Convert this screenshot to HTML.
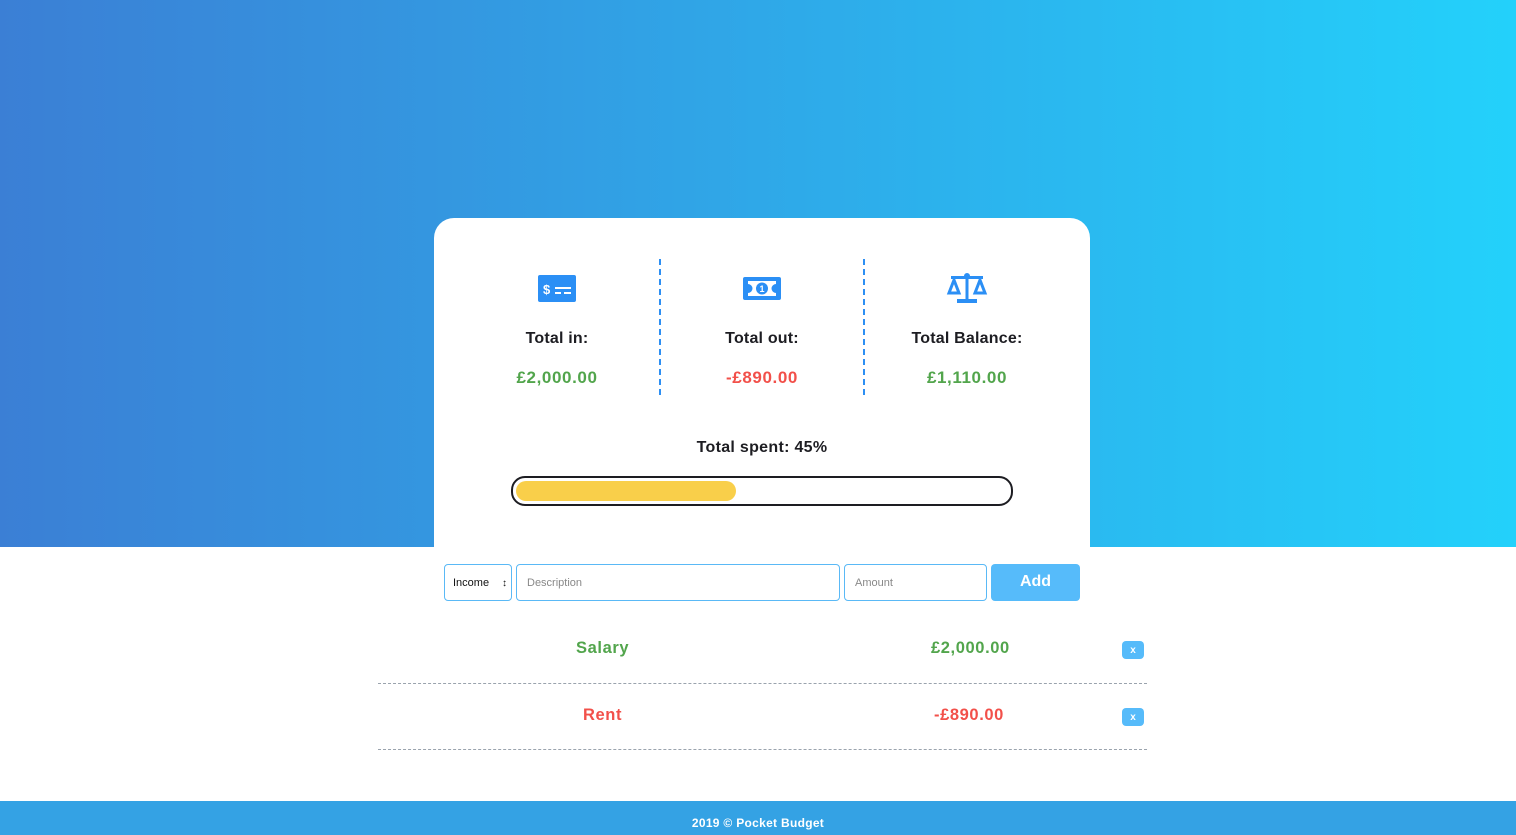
<!DOCTYPE html>
<html><head><meta charset="utf-8"><style>
*{box-sizing:border-box;margin:0;padding:0}
body{width:1516px;height:835px;overflow:hidden;background:#fff;font-family:"Liberation Sans",sans-serif;position:relative}
.top{position:absolute;left:0;top:0;width:1516px;height:547px;background:linear-gradient(90deg,#3b7fd5,#23d1fb)}
.card{position:absolute;left:434px;top:218px;width:656px;height:340px;background:#fff;border-radius:20px 20px 0 0}
.col{position:absolute;top:0;width:200px;text-align:center}
.icon{position:absolute;top:54px;left:0;width:200px;height:34px}
.lbl{position:absolute;top:112px;width:200px;font-weight:bold;font-size:16px;color:#1d1d22;letter-spacing:0.2px}
.val{position:absolute;top:150px;width:200px;font-weight:bold;font-size:17px;letter-spacing:0.6px}
.g{color:#52a54c}.r{color:#f2504a}
.div{position:absolute;top:41px;height:136px;border-left:2px dashed #2d8ff3}
.spent{position:absolute;top:221px;left:0;width:656px;text-align:center;font-weight:bold;font-size:16px;color:#1d1d22;letter-spacing:0.3px}
.bar{position:absolute;left:77px;top:258px;width:502px;height:30px;border:2.5px solid #1d1d22;border-radius:14px}
.fill{position:absolute;left:3px;top:3px;width:220px;height:20px;background:#f9cf4a;border-radius:10px}
.in{position:absolute;top:564px;height:37px;border:1px solid #5ab9f6;border-radius:4px;font-size:11px;color:#888;padding:0 10px;line-height:37px}
.add{position:absolute;left:991px;top:564px;width:89px;height:37px;background:#56bbfa;border-radius:4px;color:#fff;font-weight:bold;font-size:16px;text-align:center;line-height:35px}
.row{position:absolute;font-weight:bold;font-size:16.5px;letter-spacing:0.6px}
.x{position:absolute;left:1122px;width:22px;height:18px;background:#56bbfa;border-radius:4px;color:#fff;font-size:10px;font-weight:bold;text-align:center;line-height:19px}
.hr{position:absolute;left:378px;width:769px;border-top:1px dashed #9aa3ad}
.foot{position:absolute;left:0;top:801px;width:1516px;height:34px;background:#34a2e4;color:#fff;font-weight:bold;font-size:12px;text-align:center;padding-top:15px;letter-spacing:0.3px}
</style></head><body>
<div class="top"></div>
<div class="card">
 <div class="col" style="left:23px">
  <svg class="icon" viewBox="0 0 200 34"><rect x="81" y="3" width="38" height="27" rx="2" fill="#2b8ff5"/><text x="86" y="22" font-family="Liberation Sans" font-weight="bold" font-size="13" fill="#fff">$</text><rect x="98" y="15" width="16" height="2" fill="#fff"/><rect x="98" y="20" width="6" height="2" fill="#fff"/><rect x="107" y="20" width="7" height="2" fill="#fff"/></svg>
  <div class="lbl">Total in:</div><div class="val g">£2,000.00</div>
 </div>
 <div class="div" style="left:225px"></div>
 <div class="col" style="left:228px">
  <svg class="icon" viewBox="0 0 200 34"><rect x="81" y="5" width="38" height="23" rx="2" fill="#2b8ff5"/><path d="M86 9h28v3a4 4 0 0 0 0 9v3H86v-3a4 4 0 0 0 0-9z" fill="#fff"/><circle cx="100" cy="16.5" r="6" fill="#2b8ff5"/><text x="97.5" y="20" font-family="Liberation Sans" font-weight="bold" font-size="9" fill="#fff">1</text></svg>
  <div class="lbl">Total out:</div><div class="val r">-£890.00</div>
 </div>
 <div class="div" style="left:429px"></div>
 <div class="col" style="left:433px">
  <svg class="icon" viewBox="0 0 200 34"><g fill="#2b8ff5"><circle cx="100" cy="4" r="3"/><rect x="98.5" y="4" width="3" height="24"/><rect x="84" y="4" width="32" height="3"/><rect x="90" y="27" width="20" height="4"/></g><g fill="none" stroke="#2b8ff5" stroke-width="3"><path d="M87 8l-5 13h10z M113 8l-5 13h10z"/></g></svg>
  <div class="lbl">Total Balance:</div><div class="val g">£1,110.00</div>
 </div>
 <div class="spent">Total spent: 45%</div>
 <div class="bar"><div class="fill"></div></div>
</div>
<div class="in" style="left:444px;width:68px;color:#111;padding:0 8px">Income<span style="position:absolute;right:4px;top:0;font-size:10px">&#x2195;</span></div>
<div class="in" style="left:516px;width:324px">Description</div>
<div class="in" style="left:844px;width:143px">Amount</div>
<div class="add">Add</div>
<div class="row g" style="left:576px;top:639px">Salary</div>
<div class="row g" style="left:931px;top:639px">£2,000.00</div>
<div class="x" style="top:641px">x</div>
<div class="hr" style="top:683px"></div>
<div class="row r" style="left:583px;top:706px">Rent</div>
<div class="row r" style="left:934px;top:706px">-£890.00</div>
<div class="x" style="top:708px">x</div>
<div class="hr" style="top:749px"></div>
<div class="foot">2019 © Pocket Budget</div>
</body></html>
